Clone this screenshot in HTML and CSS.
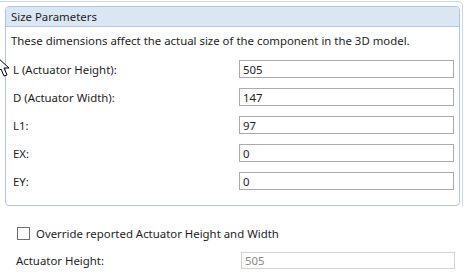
FILE: index.html
```html
<!DOCTYPE html>
<html lang="en">
<head>
    <meta charset="UTF-8">
    <title>Size Parameters</title>
    <link rel="stylesheet" href="styles.css">
</head>
<body>
    <div class="outer">
        <div class="box">
            <div class="box-header">Size Parameters</div>
            <p class="hint">These dimensions affect the actual size of the component in the 3D model.</p>
            <div class="rows">
                <label for="l">L (Actuator Height):</label>
                <input id="l" type="text" value="505">
                <label for="d">D (Actuator Width):</label>
                <input id="d" type="text" value="147">
                <label for="l1">L1:</label>
                <input id="l1" type="text" value="97">
                <label for="ex">EX:</label>
                <input id="ex" type="text" value="0">
                <label for="ey">EY:</label>
                <input id="ey" type="text" value="0">
            </div>
        </div>
    </div>
    <div class="override">
        <label class="check"><span class="checkbox"></span>Override reported Actuator Height and Width</label>
        <div class="row-disabled">
            <label for="ah">Actuator Height:</label>
            <input id="ah" type="text" value="505" disabled>
        </div>
    </div>
    <svg class="cursor" width="12" height="22" viewBox="0 0 12 22">
        <path d="M-3 0 L-3 16 L1 12 L4 19 L7 18 L4 11 L9 11 Z" fill="#fff" stroke="#000" stroke-width="1"/>
    </svg>
</body>
</html>
```

FILE: styles.css
```css
body{
    margin: 0;
    font-family: "Noto Sans", "Liberation Sans", sans-serif;
    font-size: 11.4px;
    color: #1e1e1e;
    background-color: white;
    position: relative;
}
.outer{
    width: 455px;
    margin-top: 1px;
    padding: 4px 2px 0 5px;
    border-top: 1px solid #c6d8ee;
    border-right: 1px solid #c6d8ee;
    border-top-right-radius: 5px;
}
.box{
    border: 1px solid #aec6e6;
    border-radius: 4px;
    padding-bottom: 15px;
}
.box-header{
    height: 19px;
    line-height: 19px;
    padding-left: 5px;
    background-color: #dae6f4;
    border-bottom: 1px solid #b3cae8;
    border-radius: 3px 3px 0 0;
}
.hint{
    margin: 0;
    padding: 6px 0 0 5px;
    height: 27px;
    line-height: 16px;
}
.rows{
    display: grid;
    grid-template-columns: 1fr 215px;
    row-gap: 10px;
    padding: 0 5px 0 7px;
    align-items: center;
}
.rows input, .row-disabled input{
    box-sizing: border-box;
    height: 18px;
    margin: 0;
    padding: 0 3px;
    border: 1px solid #ababab;
    font-family: inherit;
    font-size: 11.4px;
    color: #1e1e1e;
    outline: none;
}
.override{
    padding: 20px 0 0 17px;
}
.check{
    display: flex;
    align-items: center;
    height: 14px;
}
.checkbox{
    box-sizing: border-box;
    width: 13px;
    height: 13px;
    border: 1px solid #707070;
    margin-right: 6px;
}
.row-disabled{
    display: grid;
    grid-template-columns: 1fr 214px;
    align-items: center;
    margin-top: 12px;
    padding-right: 9px;
}
.row-disabled label{
    margin-left: -1px;
}
.row-disabled input{
    height: 17px;
    border-color: #d2d2d2;
    background-color: white;
    color: #8a8a8a;
}
.cursor{
    position: absolute;
    left: 0;
    top: 57px;
}
```
